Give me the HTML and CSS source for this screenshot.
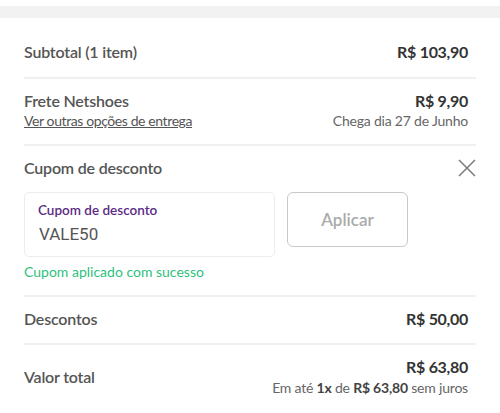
FILE: index.html
```
<!DOCTYPE html>
<html lang="pt-BR">
<head>
    <meta charset="UTF-8">
    <meta name="viewport" content="width=device-width, initial-scale=1.0">
    <title>Resumo do pedido</title>
    <link rel="stylesheet" href="styles.css">
</head>
<body>

<div class="top-band"></div>

<div class="summary">
    <div class="row row-subtotal">
        <span class="label">Subtotal (1 item)</span>
        <span class="value">R$ 103,90</span>
    </div>

    <div class="row row-shipping">
        <div>
            <div class="label">Frete Netshoes</div>
            <a class="link" href="#">Ver outras opções de entrega</a>
        </div>
        <div class="right">
            <div class="value">R$ 9,90</div>
            <div class="muted">Chega dia 27 de Junho</div>
        </div>
    </div>

    <div class="row row-coupon">
        <div class="coupon-head">
            <span class="label">Cupom de desconto</span>
            <button class="close-btn" aria-label="Fechar">
                <svg width="18" height="18" viewBox="0 0 18 18">
                    <path d="M1 1L17 17M17 1L1 17" stroke="#7a7a7a" stroke-width="1.5" fill="none"/>
                </svg>
            </button>
        </div>
        <div class="coupon-form">
            <div class="field">
                <div class="field-label">Cupom de desconto</div>
                <div class="field-value">VALE50</div>
            </div>
            <button class="apply-btn">Aplicar</button>
        </div>
        <div class="success">Cupom aplicado com sucesso</div>
    </div>

    <div class="row row-discount">
        <span class="label">Descontos</span>
        <span class="value">R$ 50,00</span>
    </div>

    <div class="row row-total">
        <span class="label">Valor total</span>
        <div class="right">
            <div class="value">R$ 63,80</div>
            <div class="muted">Em até <b>1x</b> de <b>R$ 63,80</b> sem juros</div>
        </div>
    </div>
</div>

</body>
</html>
```

FILE: styles.css
```
* {
    margin: 0;
    padding: 0;
    box-sizing: border-box;
}
body {
    font-family: Lato, "Open Sans", sans-serif;
    background-color: #fff;
    color: #555;
}
.top-band {
    margin-top: 6px;
    height: 12px;
    background-color: #f2f2f2;
}
.summary {
    padding: 0 24px;
}
.row {
    display: flex;
    justify-content: space-between;
    align-items: center;
    border-bottom: 2px solid #f0f0f0;
}
.row:last-child {
    border-bottom: none;
}
.label {
    font-size: 16px;
    line-height: 24px;
    font-weight: 600;
    letter-spacing: -0.2px;
    color: #555;
}
.value {
    font-size: 16px;
    line-height: 24px;
    font-weight: 700;
    letter-spacing: -0.3px;
    color: #333;
}
.right,
.row > .value {
    text-align: right;
    margin-right: 8px;
}
.muted {
    font-size: 14px;
    line-height: 20px;
    letter-spacing: -0.2px;
    color: #666;
}
.muted b {
    color: #444;
}
.link {
    display: block;
    font-size: 14px;
    line-height: 20px;
    letter-spacing: -0.4px;
    color: #555;
    text-decoration: underline;
}
.row-subtotal {
    padding: 22px 0 13px;
}
.row-shipping {
    padding: 12px 0 13px;
}
.row-shipping .label,
.row-shipping .value {
    line-height: 20px;
}
.row-coupon {
    display: block;
    padding: 10px 0 13px;
}
.coupon-head {
    display: flex;
    justify-content: space-between;
    align-items: center;
}
.close-btn {
    background: none;
    border: none;
    width: 18px;
    height: 18px;
    display: flex;
    cursor: pointer;
}
.coupon-form {
    display: flex;
    gap: 12px;
    margin-top: 12px;
    align-items: flex-start;
}
.field {
    width: 251px;
    height: 65px;
    border: 1px solid #ececec;
    border-radius: 5px;
    padding: 8px 13px 0;
}
.field-label {
    font-size: 13.5px;
    line-height: 18px;
    font-weight: 600;
    color: #5b2a86;
}
.field-value {
    margin-top: 4px;
    padding-left: 1px;
    font-family: Roboto, sans-serif;
    font-size: 17px;
    line-height: 22px;
    color: #555;
}
.apply-btn {
    width: 121px;
    height: 55px;
    background-color: #fff;
    border: 1px solid #c8c8c8;
    border-radius: 6px;
    font-family: inherit;
    font-size: 17px;
    font-weight: 600;
    color: #aaa;
    cursor: pointer;
}
.success {
    margin-top: 5px;
    font-size: 14px;
    line-height: 20px;
    color: #2ebf7e;
}
.row-discount {
    padding: 10px 0 12px;
}
.row-total {
    padding: 11px 0 10px;
}
.row-total .value {
    line-height: 22px;
}
```
